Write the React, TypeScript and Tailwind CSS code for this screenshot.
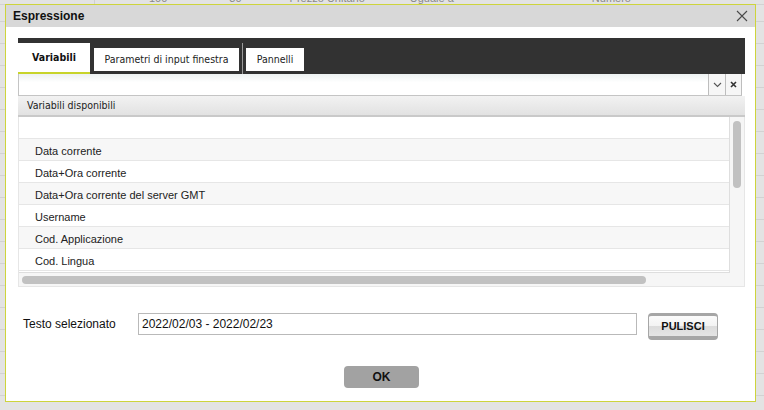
const rows = [
  '',
  'Data corrente',
  'Data+Ora corrente',
  'Data+Ora corrente del server GMT',
  'Username',
  'Cod. Applicazione',
  'Cod. Lingua',
]

const cond = "font-['DejaVu_Sans_Condensed','DejaVu_Sans',sans-serif]"
const arial = "font-['Liberation_Sans',Arial,sans-serif]"

function CloseIcon() {
  return (
    <svg width="12" height="12" viewBox="0 0 12 12">
      <path d="M1 1L11 11M11 1L1 11" stroke="#4a4a4a" strokeWidth="1.1" fill="none" />
    </svg>
  )
}

export default function App() {
  return (
    <div className={`relative w-[764px] h-[410px] overflow-hidden bg-[#e3e3e3] ${arial}`}>
      {/* page behind the modal */}
      <div className="h-full bg-[repeating-linear-gradient(to_bottom,#e3e3e3_0px,#e3e3e3_21px,#d2d2d2_21px,#d2d2d2_22px)]">
        <div className="h-[5px] overflow-hidden border-b border-[#d2d2d2]">
          <div className="-mt-[8px] flex text-[11px] leading-[12px] text-[#8a8a8a]">
            <span className="ml-[94px] w-px h-[14px] bg-[#cfcfcf]" />
            <span className="ml-[54px]">100</span>
            <span className="ml-[62px]">30</span>
            <span className="ml-[48px]">Prezzo Unitario</span>
            <span className="ml-[45px]">Uguale a</span>
            <span className="ml-[138px]">Numero</span>
          </div>
        </div>
      </div>

      {/* modal */}
      <div className="absolute left-[5px] top-[4px] w-[751px] h-[398px] border border-[#cdd43c] bg-white flex flex-col">
        <div className="h-[22px] bg-[#d8d8d8] flex items-center justify-between pl-[7px] pr-[7px]">
          <span className="text-[12px] font-bold text-[#111]">Espressione</span>
          <CloseIcon />
        </div>

        <div className="flex-1 flex flex-col pt-[11px] pl-[12px] pr-[10px]">
          {/* tabs */}
          <div className={`h-[36px] bg-[#323232] flex items-end ${cond}`}>
            <div className="w-[72px] h-[31px] bg-white border-b-2 border-[#c8d42a] flex items-center justify-center text-[10.5px] font-bold text-[#111]">
              Variabili
            </div>
            <div className="ml-[4px] mb-[3px] w-[145px] h-[23px] bg-white flex items-center justify-center text-[10.5px] text-[#222]">
              Parametri di input finestra
            </div>
            <div className="ml-[3px] w-px h-[31px] bg-[#9a9a9a]" />
            <div className="ml-[3px] mb-[3px] w-[58px] h-[23px] bg-white flex items-center justify-center text-[10.5px] text-[#222]">
              Pannelli
            </div>
          </div>

          {/* search */}
          <div className="mr-[3px] h-[22px] flex border-l border-b border-[#c4c4c4] bg-gradient-to-b from-[#edf2f2] to-white to-40%">
            <div className="flex-1" />
            <div className="w-[17px] border-l border-[#bdbdbd] bg-[#f6f6f6] flex items-center justify-center">
              <svg width="9" height="6" viewBox="0 0 9 6">
                <path d="M1 1L4.5 4.5L8 1" stroke="#555" strokeWidth="1.1" fill="none" />
              </svg>
            </div>
            <div className="w-[17px] border-l border-r border-[#bdbdbd] bg-[#f6f6f6] flex items-center justify-center">
              <svg width="7" height="7" viewBox="0 0 7 7">
                <path d="M1 1L6 6M6 1L1 6" stroke="#333" strokeWidth="1.6" fill="none" />
              </svg>
            </div>
          </div>

          {/* header */}
          <div className={`h-[21px] border-b-2 border-[#c9c9c9] bg-gradient-to-b from-[#f2f2f2] to-[#e2e2e2] flex items-center pl-[9px] text-[10.5px] text-[#222] ${cond}`}>
            Variabili disponibili
          </div>

          {/* list */}
          <div className="h-[170px] bg-[#f6f6f6] border-x border-b border-[#e6e6e6] flex flex-col">
            <div className="flex h-[156px]">
              <div className="flex-1 bg-white border-r border-b border-[#dedede] overflow-hidden">
                {rows.map((r, i) => (
                  <div
                    key={i}
                    className={`h-[22px] border-b border-[#e6e6e6] flex items-center pt-[3px] pl-[16px] text-[11px] text-[#222] ${i % 2 === 1 ? 'bg-[#f7f7f7]' : 'bg-white'}`}
                  >
                    {r}
                  </div>
                ))}
              </div>
              <div className="w-[14px] pl-[3px] pt-[4px]">
                <div className="w-[8px] h-[67px] rounded-full bg-[#c1c1c1]" />
              </div>
            </div>
            <div className="flex-1 flex items-center pl-[3px]">
              <div className="w-[624px] h-[8px] rounded-full bg-[#c1c1c1]" />
            </div>
          </div>

          {/* selected text */}
          <div className="mt-[26px] flex items-start">
            <div className="w-[120px] h-[22px] pl-[5px] flex items-center text-[12px] text-[#111]">
              Testo selezionato
            </div>
            <div className="w-[499px] h-[22px] border border-[#b9b9b9] flex items-center px-[3px] text-[12px] text-[#111]">
              2022/02/03 - 2022/02/23
            </div>
            <button className="ml-[11px] w-[70px] h-[27px] rounded-[4px] border-x border-t-[3px] border-b-[4px] border-[#a6a6a6] bg-[linear-gradient(to_bottom,#fbfbfb_0%,#f3f3f3_50%,#dcdcdc_51%,#e4e4e4_100%)] flex items-center justify-center text-[11px] font-bold text-[#111]">
              PULISCI
            </button>
          </div>

          <div className="mt-[26px] flex justify-center">
            <button className="w-[75px] h-[22px] rounded-[4px] bg-[#a2a2a2] flex items-center justify-center text-[12px] font-bold text-[#111]">
              OK
            </button>
          </div>
        </div>
      </div>
    </div>
  )
}
